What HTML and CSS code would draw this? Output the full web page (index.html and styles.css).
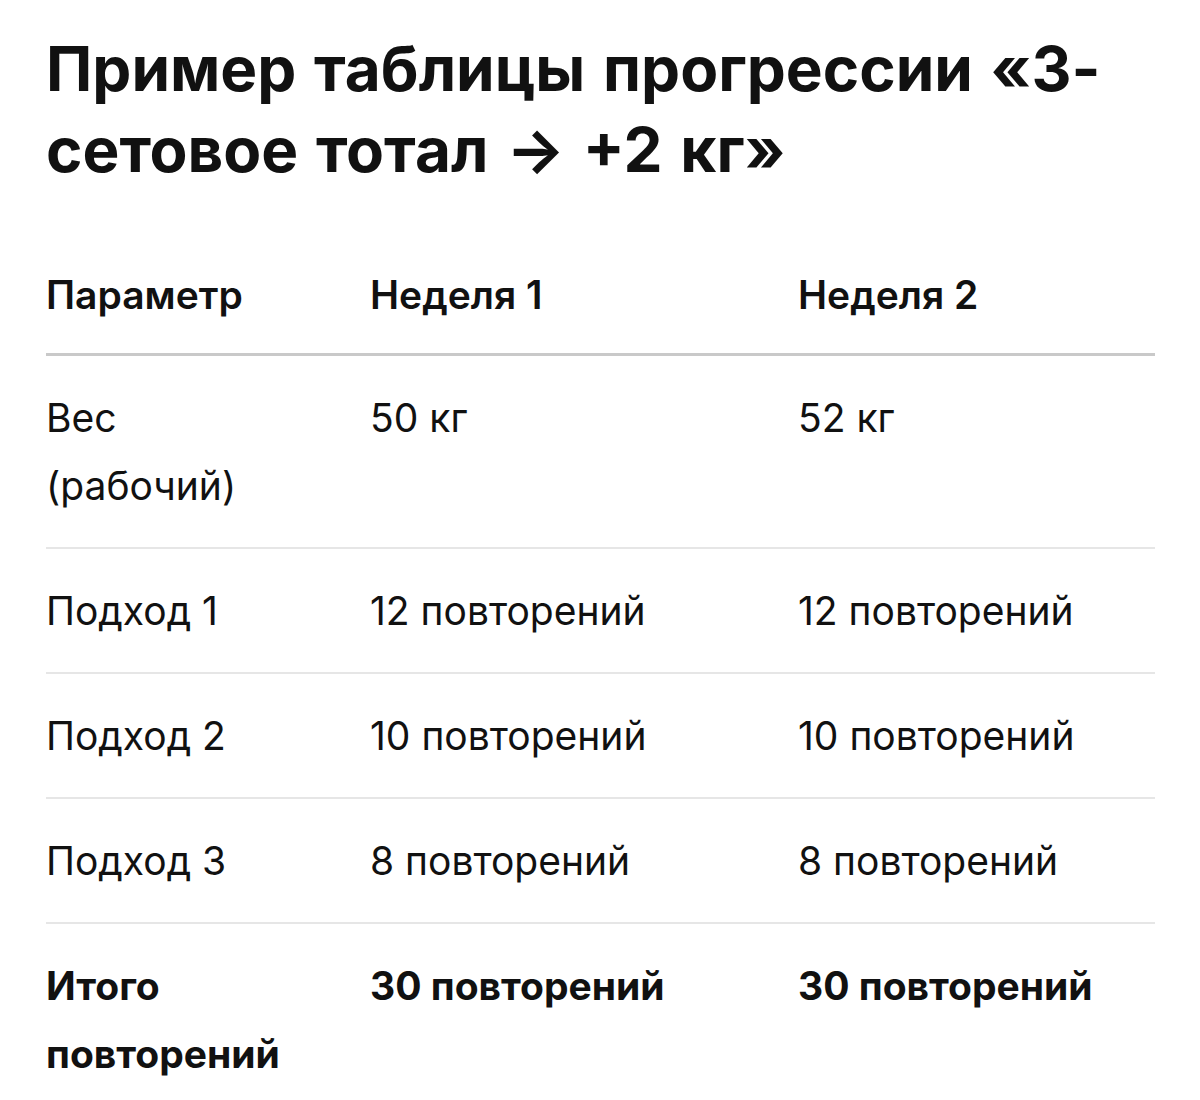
FILE: index.html
```html
<!DOCTYPE html>
<html lang="ru">
<head>
<meta charset="utf-8">
<title>Пример таблицы прогрессии</title>
<link rel="stylesheet" href="styles.css">
</head>
<body>
<main class="page">
  <h1 class="title">Пример таблицы прогрессии «3-сетовое тотал → +2 кг»</h1>
  <table class="prog">
    <colgroup>
      <col class="c1"><col class="c2"><col class="c3">
    </colgroup>
    <thead>
      <tr><th>Параметр</th><th>Неделя 1</th><th>Неделя 2</th></tr>
    </thead>
    <tbody>
      <tr><td>Вес (рабочий)</td><td>50 кг</td><td>52 кг</td></tr>
      <tr><td>Подход 1</td><td>12 повторений</td><td>12 повторений</td></tr>
      <tr><td>Подход 2</td><td>10 повторений</td><td>10 повторений</td></tr>
      <tr><td>Подход 3</td><td>8 повторений</td><td>8 повторений</td></tr>
      <tr class="total"><td>Итого повторений</td><td>30 повторений</td><td>30 повторений</td></tr>
    </tbody>
  </table>
</main>
</body>
</html>
```
FILE: styles.css
```css
html, body {
  margin: 0;
  padding: 0;
  background: #fff;
}
body {
  font-family: Inter, "Noto Sans", "DejaVu Sans", sans-serif;
  color: #111;
}
.page {
  padding: 28px 45px 0 46px;
}
.title {
  margin: 0 0 43px 0;
  font-size: 62px;
  line-height: 81px;
  font-weight: 700;
  letter-spacing: 0;
  word-spacing: 3px;
}
.prog {
  width: 100%;
  border-collapse: collapse;
  table-layout: fixed;
  font-size: 39px;
  line-height: 68px;
}
.c1 { width: 324px; }
.c2 { width: 428px; }
.prog th, .prog td {
  text-align: left;
  vertical-align: top;
  padding: 28px 60px 27px 0;
}
.prog th {
  font-weight: 600;
  padding-bottom: 24px;
  border-bottom: 3px solid #c9c9c9;
}
.prog td {
  font-weight: 400;
}
.prog tbody tr + tr td {
  border-top: 2px solid #e6e6e6;
}
.prog .total td {
  font-weight: 700;
}
```
